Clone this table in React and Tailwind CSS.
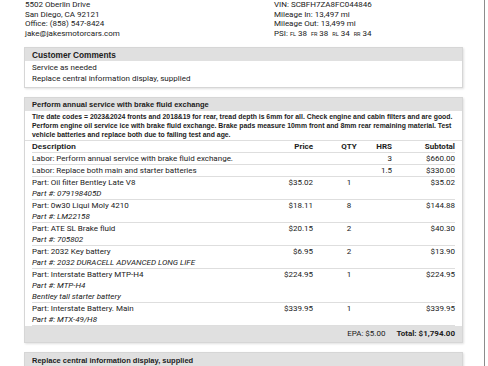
import React from 'react'

const items = [
  { desc: 'Labor: Perform annual service with brake fluid exchange.', hrs: '3', subtotal: '$660.00' },
  { desc: 'Labor: Replace both main and starter batteries', hrs: '1.5', subtotal: '$330.00' },
  { desc: 'Part: Oil filter Bentley Late V8', part: '079198405D', price: '$35.02', qty: '1', subtotal: '$35.02' },
  { desc: 'Part: 0w30 Liqui Moly 4210', part: 'LM22158', price: '$18.11', qty: '8', subtotal: '$144.88' },
  { desc: 'Part: ATE SL Brake fluid', part: '705802', price: '$20.15', qty: '2', subtotal: '$40.30' },
  { desc: 'Part: 2032 Key battery', part: '2032 DURACELL ADVANCED LONG LIFE', price: '$6.95', qty: '2', subtotal: '$13.90' },
  { desc: 'Part: Interstate Battery MTP-H4', part: 'MTP-H4', note: 'Bentley tall starter battery', price: '$224.95', qty: '1', subtotal: '$224.95' },
  { desc: 'Part: Interstate Battery. Main', part: 'MTX-49/H8', price: '$339.95', qty: '1', subtotal: '$339.95' },
]

const roboto = "font-['Roboto','Liberation_Sans',sans-serif]"
const helv = "font-['Liberation_Sans','Arial',sans-serif]"

function HeadRow() {
  return (
    <div className="flex border-b border-[#dedede] leading-[11px] font-bold">
      <div className={`flex-1 ${helv}`}>Description</div>
      <div className="w-[56px] text-right">Price</div>
      <div className="w-[60px] pl-[12px] text-center">QTY</div>
      <div className="w-[19px] text-right">HRS</div>
      <div className="w-[63px] text-right">Subtotal</div>
    </div>
  )
}

function Row({ item }) {
  return (
    <div className="flex border-b border-[#dedede] leading-[11px]">
      <div className="flex-1">
        <div>{item.desc}</div>
        {item.part && <div className="italic">Part #: {item.part}</div>}
        {item.note && <div className="italic">{item.note}</div>}
      </div>
      <div className="w-[56px] text-right">{item.price}</div>
      <div className="w-[60px] pl-[12px] text-center">{item.qty}</div>
      <div className="w-[19px] text-right">{item.hrs}</div>
      <div className="w-[63px] text-right">{item.subtotal}</div>
    </div>
  )
}

export default function App() {
  return (
    <div className={`w-[485px] h-[366px] overflow-hidden bg-white border-r border-[#8c8c8c] pl-[24px] pr-[21px] text-[#212121] ${roboto}`}>
      {/* Shop / vehicle info */}
      <div className="flex text-[8px] leading-[9.6px]">
        <div className="w-[250px] pl-[1px]">
          <div>5502 Oberlin Drive</div>
          <div>San Diego, CA 92121</div>
          <div>Office: (858) 547-8424</div>
          <div>jake@jakesmotorcars.com</div>
        </div>
        <div>
          <div>VIN: SCBFH7ZA8FC044846</div>
          <div>Mileage In: 13,497 mi</div>
          <div>Mileage Out: 13,499 mi</div>
          <div className="h-[9.6px]">
            PSI: <span className="text-[5.5px] leading-none">FL</span> 38 <span className="text-[5.5px] leading-none ml-[2px]">FR</span> 38{' '}
            <span className="text-[5.5px] leading-none ml-[2px]">RL</span> 34 <span className="text-[5.5px] leading-none ml-[2px]">RR</span> 34
          </div>
        </div>
      </div>

      {/* Customer comments */}
      <div className="mt-[9px] border border-[#d6d6d6] shadow-[1px_1px_2px_rgba(0,0,0,0.12)]">
        <div className={`bg-[#e0e0e0] h-[13px] px-[7px] flex items-center text-[8.3px] font-bold ${helv}`}>
          Customer Comments
        </div>
        <div className="px-[7px] pt-[1px] pb-[3px] text-[8px] leading-[11px]">
          <div>Service as needed</div>
          <div>Replace central information display, supplied</div>
        </div>
      </div>

      {/* Job */}
      <div className="mt-[9px] border border-[#d6d6d6] shadow-[1px_1px_2px_rgba(0,0,0,0.12)]">
        <div className={`bg-[#e0e0e0] h-[13px] px-[7px] flex items-center text-[7.5px] font-bold ${helv}`}>
          Perform annual service with brake fluid exchange
        </div>
        <div className={`px-[7px] pt-[1px] pb-[1px] text-[6.85px] leading-[9px] font-bold border-b border-[#dedede] ${helv}`}>
          Tire date codes = 2023&amp;2024 fronts and 2018&amp;19 for rear, tread depth is 6mm for all. Check engine and cabin filters and are good.
          Perform engine oil service ice with brake fluid exchange. Brake pads measure 10mm front and 8mm rear remaining material. Test
          vehicle batteries and replace both due to failing test and age.
        </div>
        <div className="px-[7px] text-[8px]">
          <HeadRow />
          {items.map((item, i) => (
            <Row key={i} item={item} />
          ))}
        </div>
        <div className="bg-[#e0e0e0] h-[16px] px-[7px] flex items-center justify-end gap-[11px] text-[8px]">
          <span>EPA: $5.00</span>
          <span className="font-bold">Total: $1,794.00</span>
        </div>
      </div>

      {/* Next job */}
      <div className="mt-[9px] border border-[#d6d6d6] shadow-[1px_1px_2px_rgba(0,0,0,0.12)]">
        <div className={`bg-[#e0e0e0] h-[14px] px-[7px] flex items-center text-[7.5px] font-bold ${helv}`}>
          Replace central information display, supplied
        </div>
        <div className="px-[7px] text-[8px]">
          <HeadRow />
        </div>
      </div>
    </div>
  )
}
